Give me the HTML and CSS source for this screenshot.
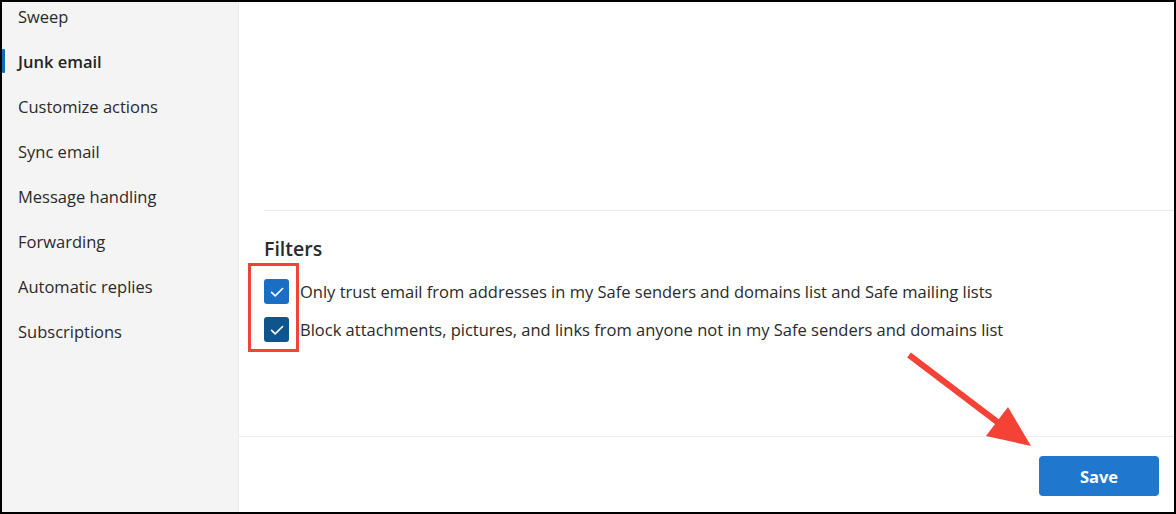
FILE: index.html
```html
<!DOCTYPE html>
<html lang="en">
<head>
<meta charset="utf-8">
<title>Junk email settings</title>
<link rel="stylesheet" href="styles.css">
</head>
<body>
<div class="frame">
  <nav class="sidebar">
    <ul class="nav-list">
      <li class="nav-item">Sweep</li>
      <li class="nav-item active">Junk email</li>
      <li class="nav-item">Customize actions</li>
      <li class="nav-item">Sync email</li>
      <li class="nav-item">Message handling</li>
      <li class="nav-item">Forwarding</li>
      <li class="nav-item">Automatic replies</li>
      <li class="nav-item">Subscriptions</li>
    </ul>
  </nav>
  <main class="main">
    <div class="content">
      <div class="upper"></div>
      <section class="filters">
        <h2 class="filters-title">Filters</h2>
        <div class="options">
          <label class="option">
            <span class="checkbox">
              <svg viewBox="0 0 24 24" width="24" height="24"><path d="M6.6 12.4 L10.2 15.9 L17.6 8.5" fill="none" stroke="#fff" stroke-width="1.6" stroke-linecap="round" stroke-linejoin="round"/></svg>
            </span>
            <span class="option-text">Only trust email from addresses in my Safe senders and domains list and Safe mailing lists</span>
          </label>
          <label class="option">
            <span class="checkbox dark">
              <svg viewBox="0 0 24 24" width="24" height="24"><path d="M6.6 12.4 L10.2 15.9 L17.6 8.5" fill="none" stroke="#fff" stroke-width="1.6" stroke-linecap="round" stroke-linejoin="round"/></svg>
            </span>
            <span class="option-text">Block attachments, pictures, and links from anyone not in my Safe senders and domains list</span>
          </label>
          <span class="highlight"></span>
        </div>
      </section>
    </div>
    <footer class="footer">
      <button class="save-btn" type="button">Save</button>
    </footer>
  </main>
  <svg class="arrow" width="1176" height="514" viewBox="0 0 1176 514">
    <line x1="909" y1="355" x2="1000" y2="424" stroke="#f44336" stroke-width="6" stroke-linecap="butt"/>
    <polygon points="1031,446 986,436 1008,407" fill="#f44336"/>
  </svg>
</div>
</body>
</html>
```
FILE: styles.css
```css
* { box-sizing: border-box; }
html, body { margin: 0; padding: 0; background: #fff; }
body {
  font-family: "Open Sans", "Noto Sans", "Liberation Sans", sans-serif;
  color: #242424;
}
.frame {
  position: relative;
  width: 1176px;
  height: 514px;
  border: 2px solid #000;
  display: flex;
  overflow: hidden;
  background: #fff;
}
.sidebar {
  width: 237px;
  flex: none;
  background: #f4f4f4;
  border-right: 1px solid #ececec;
}
.nav-list {
  list-style: none;
  margin: -8px 0 0;
  padding: 0;
}
.nav-item {
  position: relative;
  height: 45px;
  line-height: 45px;
  padding-left: 16px;
  font-size: 16.5px;
  color: #2a2a2a;
  white-space: nowrap;
}
.nav-item.active { font-weight: 600; color: #242424; }
.nav-item.active::before {
  content: "";
  position: absolute;
  left: 0;
  top: 10px;
  width: 3px;
  height: 24px;
  background: #0f6cbd;
  border-radius: 1px;
}
.main {
  flex: 1;
  display: flex;
  flex-direction: column;
  min-width: 0;
}
.content { flex: 1; }
.upper { height: 208px; }
.filters {
  margin-left: 25px;
  border-top: 1px solid #ececec;
  padding-top: 25px;
}
.filters-title {
  margin: 0;
  font-size: 19.5px;
  font-weight: 600;
  line-height: 26px;
  color: #2a2a2a;
}
.options {
  position: relative;
  margin-top: 17px;
  display: flex;
  flex-direction: column;
  gap: 13px;
}
.option {
  display: flex;
  align-items: center;
  gap: 11px;
  height: 25px;
}
.checkbox {
  width: 25px;
  height: 25px;
  flex: none;
  border-radius: 3px;
  background: #1a6fc4;
  display: flex;
  align-items: center;
  justify-content: center;
}
.checkbox.dark { background: #0f548c; }
.option-text {
  font-size: 16.5px;
  color: #2a2a2a;
  white-space: nowrap;
}
.highlight {
  position: absolute;
  left: -16px;
  top: -16px;
  width: 51px;
  height: 89px;
  border: 3px solid #f44336;
}
.footer {
  height: 76px;
  flex: none;
  border-top: 1px solid #ececec;
  display: flex;
  justify-content: flex-end;
  align-items: flex-start;
  padding: 19px 15px 0 0;
}
.save-btn {
  width: 120px;
  height: 40px;
  border: none;
  border-radius: 4px;
  background: #1f78cd;
  color: #fff;
  font-family: inherit;
  font-size: 16.5px;
  font-weight: 700;
}
.arrow {
  position: absolute;
  left: -2px;
  top: -2px;
  pointer-events: none;
}
```
